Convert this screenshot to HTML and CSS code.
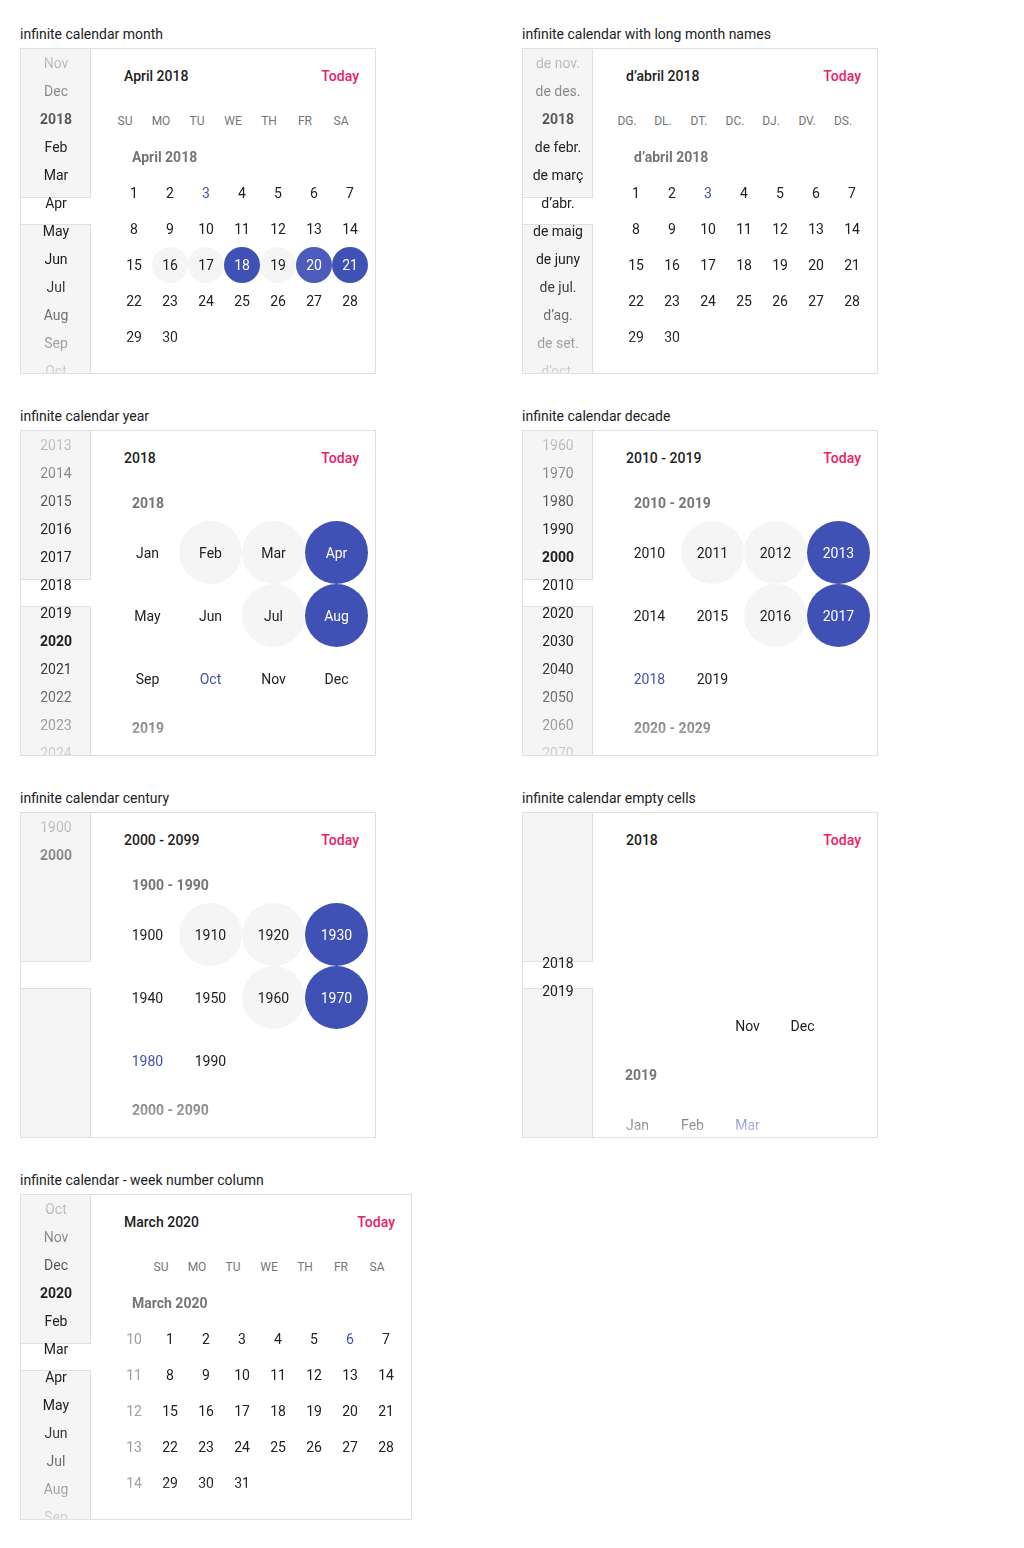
FILE: index.html
```html
<!DOCTYPE html>
<html lang="en">
<head>
<meta charset="utf-8">
<title>Infinite calendar</title>
<link rel="stylesheet" href="styles.css">
</head>
<body>
<div class="page">

  <section class="demo">
    <div class="demo-title">infinite calendar month</div>
    <div class="cal">
      <div class="side"><div class="side-list">
        <div class="si">Nov</div><div class="si">Dec</div><div class="si yr">2018</div><div class="si">Feb</div><div class="si">Mar</div><div class="si">Apr</div><div class="si">May</div><div class="si">Jun</div><div class="si">Jul</div><div class="si">Aug</div><div class="si">Sep</div><div class="si">Oct</div>
      </div></div>
      <div class="main">
        <div class="head"><span>April 2018</span><span class="today">Today</span></div>
        <div class="weekdays"><span>SU</span><span>MO</span><span>TU</span><span>WE</span><span>TH</span><span>FR</span><span>SA</span></div>
        <div class="list">
          <div class="label">April 2018</div>
          <div class="days">
            <span class="d">1</span><span class="d">2</span><span class="d now">3</span><span class="d">4</span><span class="d">5</span><span class="d">6</span><span class="d">7</span>
            <span class="d">8</span><span class="d">9</span><span class="d">10</span><span class="d">11</span><span class="d">12</span><span class="d">13</span><span class="d">14</span>
            <span class="d">15</span><span class="d hl">16</span><span class="d hl">17</span><span class="d sel">18</span><span class="d hl">19</span><span class="d sel2">20</span><span class="d sel">21</span>
            <span class="d">22</span><span class="d">23</span><span class="d">24</span><span class="d">25</span><span class="d">26</span><span class="d">27</span><span class="d">28</span>
            <span class="d">29</span><span class="d">30</span>
          </div>
        </div>
      </div>
    </div>
  </section>

  <section class="demo">
    <div class="demo-title">infinite calendar with long month names</div>
    <div class="cal">
      <div class="side"><div class="side-list">
        <div class="si">de nov.</div><div class="si">de des.</div><div class="si yr">2018</div><div class="si">de febr.</div><div class="si">de març</div><div class="si">d’abr.</div><div class="si">de maig</div><div class="si">de juny</div><div class="si">de jul.</div><div class="si">d’ag.</div><div class="si">de set.</div><div class="si">d’oct.</div>
      </div></div>
      <div class="main">
        <div class="head"><span>d’abril 2018</span><span class="today">Today</span></div>
        <div class="weekdays"><span>DG.</span><span>DL.</span><span>DT.</span><span>DC.</span><span>DJ.</span><span>DV.</span><span>DS.</span></div>
        <div class="list">
          <div class="label">d’abril 2018</div>
          <div class="days">
            <span class="d">1</span><span class="d">2</span><span class="d now">3</span><span class="d">4</span><span class="d">5</span><span class="d">6</span><span class="d">7</span>
            <span class="d">8</span><span class="d">9</span><span class="d">10</span><span class="d">11</span><span class="d">12</span><span class="d">13</span><span class="d">14</span>
            <span class="d">15</span><span class="d">16</span><span class="d">17</span><span class="d">18</span><span class="d">19</span><span class="d">20</span><span class="d">21</span>
            <span class="d">22</span><span class="d">23</span><span class="d">24</span><span class="d">25</span><span class="d">26</span><span class="d">27</span><span class="d">28</span>
            <span class="d">29</span><span class="d">30</span>
          </div>
        </div>
      </div>
    </div>
  </section>

  <section class="demo">
    <div class="demo-title">infinite calendar year</div>
    <div class="cal">
      <div class="side"><div class="side-list">
        <div class="si">2013</div><div class="si">2014</div><div class="si">2015</div><div class="si">2016</div><div class="si">2017</div><div class="si">2018</div><div class="si">2019</div><div class="si yr">2020</div><div class="si">2021</div><div class="si">2022</div><div class="si">2023</div><div class="si">2024</div>
      </div></div>
      <div class="main">
        <div class="head"><span>2018</span><span class="today">Today</span></div>
        <div class="list">
          <div class="label">2018</div>
          <div class="cells">
            <span class="d">Jan</span><span class="d hl">Feb</span><span class="d hl">Mar</span><span class="d sel">Apr</span>
            <span class="d">May</span><span class="d">Jun</span><span class="d hl">Jul</span><span class="d sel">Aug</span>
            <span class="d">Sep</span><span class="d now">Oct</span><span class="d">Nov</span><span class="d">Dec</span>
          </div>
          <div class="label">2019</div>
        </div>
      </div>
    </div>
  </section>

  <section class="demo">
    <div class="demo-title">infinite calendar decade</div>
    <div class="cal">
      <div class="side"><div class="side-list">
        <div class="si">1960</div><div class="si">1970</div><div class="si">1980</div><div class="si">1990</div><div class="si yr">2000</div><div class="si">2010</div><div class="si">2020</div><div class="si">2030</div><div class="si">2040</div><div class="si">2050</div><div class="si">2060</div><div class="si">2070</div>
      </div></div>
      <div class="main">
        <div class="head"><span>2010 - 2019</span><span class="today">Today</span></div>
        <div class="list">
          <div class="label">2010 - 2019</div>
          <div class="cells">
            <span class="d">2010</span><span class="d hl">2011</span><span class="d hl">2012</span><span class="d sel">2013</span>
            <span class="d">2014</span><span class="d">2015</span><span class="d hl">2016</span><span class="d sel">2017</span>
            <span class="d now">2018</span><span class="d">2019</span>
          </div>
          <div class="label">2020 - 2029</div>
        </div>
      </div>
    </div>
  </section>

  <section class="demo">
    <div class="demo-title">infinite calendar century</div>
    <div class="cal">
      <div class="side"><div class="side-list">
        <div class="si">1900</div><div class="si yr">2000</div>
      </div></div>
      <div class="main">
        <div class="head"><span>2000 - 2099</span><span class="today">Today</span></div>
        <div class="list">
          <div class="label">1900 - 1990</div>
          <div class="cells">
            <span class="d">1900</span><span class="d hl">1910</span><span class="d hl">1920</span><span class="d sel">1930</span>
            <span class="d">1940</span><span class="d">1950</span><span class="d hl">1960</span><span class="d sel">1970</span>
            <span class="d now">1980</span><span class="d">1990</span>
          </div>
          <div class="label">2000 - 2090</div>
        </div>
      </div>
    </div>
  </section>

  <section class="demo">
    <div class="demo-title">infinite calendar empty cells</div>
    <div class="cal">
      <div class="side"><div class="side-list offset">
        <div class="si">2018</div><div class="si">2019</div>
      </div></div>
      <div class="main">
        <div class="head"><span>2018</span><span class="today">Today</span></div>
        <div class="list empty">
          <div class="cells narrow">
            <span class="d"></span><span class="d"></span><span class="d">Nov</span><span class="d">Dec</span>
          </div>
          <div class="label short">2019</div>
          <div class="cells narrow">
            <span class="d">Jan</span><span class="d">Feb</span><span class="d now">Mar</span>
          </div>
        </div>
      </div>
    </div>
  </section>

  <section class="demo">
    <div class="demo-title">infinite calendar - week number column</div>
    <div class="cal wide">
      <div class="side"><div class="side-list">
        <div class="si">Oct</div><div class="si">Nov</div><div class="si">Dec</div><div class="si yr">2020</div><div class="si">Feb</div><div class="si">Mar</div><div class="si">Apr</div><div class="si">May</div><div class="si">Jun</div><div class="si">Jul</div><div class="si">Aug</div><div class="si">Sep</div>
      </div></div>
      <div class="main">
        <div class="head"><span>March 2020</span><span class="today">Today</span></div>
        <div class="weekdays w8"><span></span><span>SU</span><span>MO</span><span>TU</span><span>WE</span><span>TH</span><span>FR</span><span>SA</span></div>
        <div class="list">
          <div class="label">March 2020</div>
          <div class="days w8">
            <span class="d wk">10</span><span class="d">1</span><span class="d">2</span><span class="d">3</span><span class="d">4</span><span class="d">5</span><span class="d now">6</span><span class="d">7</span>
            <span class="d wk">11</span><span class="d">8</span><span class="d">9</span><span class="d">10</span><span class="d">11</span><span class="d">12</span><span class="d">13</span><span class="d">14</span>
            <span class="d wk">12</span><span class="d">15</span><span class="d">16</span><span class="d">17</span><span class="d">18</span><span class="d">19</span><span class="d">20</span><span class="d">21</span>
            <span class="d wk">13</span><span class="d">22</span><span class="d">23</span><span class="d">24</span><span class="d">25</span><span class="d">26</span><span class="d">27</span><span class="d">28</span>
            <span class="d wk">14</span><span class="d">29</span><span class="d">30</span><span class="d">31</span>
          </div>
        </div>
      </div>
    </div>
  </section>

</div>
</body>
</html>
```

FILE: styles.css
```css
* { box-sizing: border-box; }

body {
  margin: 0;
  background: #fff;
  color: #212121;
  font-family: Roboto, "Liberation Sans", Arial, sans-serif;
}

.page {
  display: grid;
  grid-template-columns: 502px 502px;
  row-gap: 32px;
  align-items: start;
  padding: 24px 0 0 20px;
}

.demo-title {
  font-size: 14px;
  line-height: 20px;
  margin-bottom: 4px;
  color: #212121;
}

.cal {
  display: flex;
  width: 356px;
  height: 326px;
  border: 1px solid #e0e0e0;
  overflow: hidden;
  background: #fff;
}
.cal.wide { width: 392px; }

/* sidebar */
.side {
  flex: 0 0 70px;
  overflow: hidden;
  background:
    linear-gradient(to bottom, #e0e0e0 0 148px, transparent 148px 176px, #e0e0e0 176px) right top / 1px 100% no-repeat,
    linear-gradient(to bottom, #f5f5f5 0 148px, #e0e0e0 148px 149px, #fff 149px 175px, #e0e0e0 175px 176px, #f5f5f5 176px);
}
.side-list {
  height: 100%;
  -webkit-mask-image: linear-gradient(to bottom, rgba(0,0,0,.15) 0, #000 100px, #000 calc(100% - 100px), rgba(0,0,0,.15) 100%);
  mask-image: linear-gradient(to bottom, rgba(0,0,0,.15) 0, #000 100px, #000 calc(100% - 100px), rgba(0,0,0,.15) 100%);
}
.side-list.offset { padding-top: 136px; }
.si {
  height: 28px;
  line-height: 28px;
  text-align: center;
  font-size: 14px;
  white-space: nowrap;
  color: #212121;
}
.si.yr { font-weight: 700; }

/* main area */
.main {
  flex: 1;
  min-width: 0;
  display: flex;
  flex-direction: column;
}
.head {
  flex: 0 0 54px;
  display: flex;
  align-items: center;
  justify-content: space-between;
  padding: 0 16px 0 33px;
  font-size: 14px;
  font-weight: 500;
  color: #212121;
}
.today { color: #e91e63; }

.weekdays {
  flex: 0 0 36px;
  display: grid;
  grid-template-columns: repeat(7, 36px);
  align-items: center;
  justify-items: center;
  margin-left: 16px;
  font-size: 12px;
  color: #757575;
}
.weekdays.w8 { grid-template-columns: repeat(8, 36px); }

.list {
  flex: 1;
  min-height: 0;
  overflow: hidden;
  -webkit-mask-image: linear-gradient(to bottom, #000 calc(100% - 38px), rgba(0,0,0,.25) 100%);
  mask-image: linear-gradient(to bottom, #000 calc(100% - 38px), rgba(0,0,0,.25) 100%);
}
.list.empty { padding-top: 127px; }

.label {
  height: 36px;
  line-height: 36px;
  padding-left: 41px;
  font-size: 14px;
  font-weight: 700;
  color: #757575;
  white-space: nowrap;
}
.label.short { padding-left: 32px; }

.days {
  display: grid;
  grid-template-columns: repeat(7, 36px);
  grid-auto-rows: 36px;
  margin-left: 25px;
  font-size: 14px;
}
.days.w8 { grid-template-columns: repeat(8, 36px); }

.cells {
  display: grid;
  grid-template-columns: repeat(4, 63px);
  grid-auto-rows: 63px;
  margin-left: 25px;
  font-size: 14px;
}
.cells.narrow {
  grid-template-columns: repeat(4, 55px);
  margin-left: 17px;
}

.d {
  display: flex;
  align-items: center;
  justify-content: center;
  border-radius: 50%;
  color: #212121;
}
.d.hl { background: #f5f5f5; }
.d.sel { background: #3f51b5; color: #fff; }
.d.sel2 { background: #4b5cba; color: #fff; }
.d.now { color: #3f51b5; }
.d.wk { color: #9e9e9e; }
```
